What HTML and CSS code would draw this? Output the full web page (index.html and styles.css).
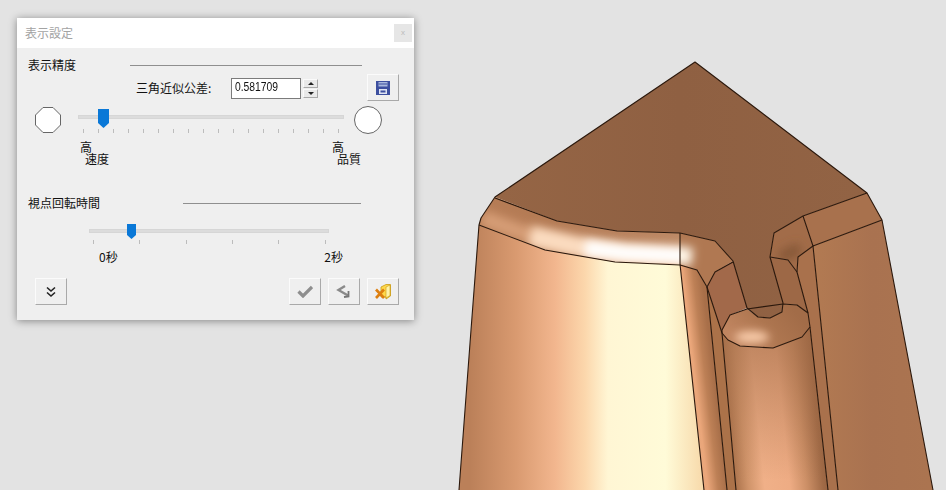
FILE: index.html
```html
<!DOCTYPE html>
<html lang="ja">
<head>
<meta charset="utf-8">
<title>表示設定</title>
<link rel="stylesheet" href="styles.css">
</head>
<body>
<svg class="model" width="946" height="490" viewBox="0 0 946 490" aria-hidden="true">
  <defs>
    <linearGradient id="gTop" gradientUnits="userSpaceOnUse" x1="500" y1="200" x2="860" y2="200">
      <stop offset="0" stop-color="#956545"/><stop offset=".5" stop-color="#8f6042"/><stop offset="1" stop-color="#926344"/>
    </linearGradient>
    <linearGradient id="gLeft" gradientUnits="userSpaceOnUse" x1="470" y1="400" x2="700" y2="400">
      <stop offset="0" stop-color="#bb8059"/><stop offset=".2" stop-color="#d99a70"/><stop offset=".37" stop-color="#f2b68e"/>
      <stop offset=".5" stop-color="#fcd7ac"/><stop offset=".6" stop-color="#fff6d4"/><stop offset=".85" stop-color="#fffbd8"/><stop offset="1" stop-color="#f8dcae"/>
    </linearGradient>
    <linearGradient id="gFillet" gradientUnits="userSpaceOnUse" x1="480" y1="210" x2="680" y2="210">
      <stop offset="0" stop-color="#b67c55"/><stop offset=".35" stop-color="#b47b55"/><stop offset="1" stop-color="#bd8a66"/>
    </linearGradient>
    <linearGradient id="gStrip" gradientUnits="userSpaceOnUse" x1="682" y1="400" x2="716" y2="396">
      <stop offset="0" stop-color="#e8ad82"/><stop offset=".45" stop-color="#eaa67a"/><stop offset=".75" stop-color="#bd8056"/><stop offset="1" stop-color="#a86f49"/>
    </linearGradient>
    <linearGradient id="gCyl" gradientUnits="userSpaceOnUse" x1="726" y1="404" x2="826" y2="394">
      <stop offset="0" stop-color="#a87049"/><stop offset=".14" stop-color="#d0946a"/><stop offset=".3" stop-color="#f0b088"/><stop offset=".55" stop-color="#eeac84"/>
      <stop offset=".72" stop-color="#cc8f66"/><stop offset=".88" stop-color="#a06a46"/><stop offset="1" stop-color="#8d5c3c"/>
    </linearGradient>
    <linearGradient id="gCylShade" gradientUnits="userSpaceOnUse" x1="770" y1="340" x2="770" y2="480">
      <stop offset="0" stop-color="#a06a46" stop-opacity=".6"/><stop offset="1" stop-color="#a06a46" stop-opacity="0"/>
    </linearGradient>
    <linearGradient id="gRight" gradientUnits="userSpaceOnUse" x1="815" y1="380" x2="930" y2="380">
      <stop offset="0" stop-color="#b27a52"/><stop offset=".5" stop-color="#a97250"/><stop offset="1" stop-color="#ab7450"/>
    </linearGradient>
    <linearGradient id="gOval" gradientUnits="userSpaceOnUse" x1="740" y1="345" x2="790" y2="305">
      <stop offset="0" stop-color="#c08560"/><stop offset=".5" stop-color="#ae7650"/><stop offset="1" stop-color="#a26c48"/>
    </linearGradient>
    <filter id="blur6" filterUnits="userSpaceOnUse" x="440" y="170" width="320" height="130"><feGaussianBlur stdDeviation="6"/></filter>
    <filter id="blur5" filterUnits="userSpaceOnUse" x="440" y="170" width="400" height="130"><feGaussianBlur stdDeviation="5"/></filter>
    <filter id="blur4" filterUnits="userSpaceOnUse" x="700" y="300" width="100" height="80"><feGaussianBlur stdDeviation="4"/></filter>
    <clipPath id="cFillet"><polygon points="495,197 481,218 479,225 545,250 615,262 680,264 680,233 617,231 557,221"/></clipPath>
    <clipPath id="cFillet2"><polygon points="680,233 715,241 733,261 715,272 707,287 697,270 680,265"/></clipPath>
    <clipPath id="cOval"><polygon points="783,304 797,305 808,313 810,327 802,337 773,348 740,346 728,340 722,333 722,330 730,315 747,309 758,317 770,318 782,312"/></clipPath>
    <clipPath id="cInner"><polygon points="770,257 774,233 803,216 813,246 798,257 797,272 788,260"/></clipPath>
  </defs>

  <polygon fill="url(#gTop)" points="695,62 495,197 557,221 617,231 680,233 715,241 733,261 747,308 758,317 770,318 782,312 783,303 770,257 774,233 803,216 867,193"/>
  <polygon fill="url(#gLeft)" points="479,225 545,250 615,262 680,264 704,490 459,490"/>
  <polygon fill="url(#gFillet)" points="495,197 481,218 479,225 545,250 615,262 680,264 680,233 617,231 557,221"/>
  <g clip-path="url(#cFillet)">
    <polyline points="482,218 520,232 565,246 625,258 690,264" fill="none" stroke="#d69d76" stroke-width="16" filter="url(#blur5)"/>
    <polyline points="530,236 575,246 625,254 690,258" fill="none" stroke="#fbdcc0" stroke-width="20" filter="url(#blur5)"/>
    <polyline points="585,248 625,253 690,256" fill="none" stroke="#ffffff" stroke-width="15" filter="url(#blur5)"/>
  </g>
  <polygon fill="#b07852" points="680,233 715,241 733,261 715,272 707,287 697,270 680,265"/>
  <g clip-path="url(#cFillet2)">
    <polyline points="668,254 692,257" fill="none" stroke="#fff6e8" stroke-width="18" filter="url(#blur5)"/>
  </g>
  <polygon fill="url(#gStrip)" points="680,264 697,270 707,287 727,490 704,490"/>
  <polygon fill="#a2694a" points="707,287 715,272 733,261 747,308 730,315 722,333"/>
  <polygon fill="#ab7249" points="707,287 722,333 736,490 727,490"/>
  <polygon fill="url(#gCyl)" points="722,333 740,346 773,348 802,337 810,327 828,490 736,490"/>
  <polygon fill="url(#gCylShade)" points="722,333 740,346 773,348 802,337 810,327 828,490 736,490"/>
  <polygon fill="#9d6846" points="770,257 788,260 797,272 808,313 797,305 783,304"/>
  <polygon fill="#a8714d" points="803,216 867,193 882,220 813,246"/>
  <polygon fill="#a26c49" points="770,257 774,233 803,216 813,246 798,257 797,272 788,260"/>
  <g clip-path="url(#cInner)">
    <polyline points="780,258 800,248" fill="none" stroke="#865839" stroke-width="12" filter="url(#blur5)"/>
  </g>
  <polygon fill="url(#gRight)" points="813,246 882,220 933,490 838,490"/>
  <polygon fill="#a9714c" points="813,246 798,257 797,272 808,313 810,327 828,490 838,490"/>
  <polygon fill="url(#gOval)" points="783,304 797,305 808,313 810,327 802,337 773,348 740,346 728,340 722,333 722,330 730,315 747,309 758,317 770,318 782,312"/>
  <g clip-path="url(#cOval)">
    <ellipse cx="752" cy="337" rx="17" ry="6" fill="#f9ccaa" filter="url(#blur4)"/>
  </g>

  <g fill="none" stroke="#2b180c" stroke-width="1.1" stroke-linejoin="round">
    <polyline points="459,490 471,330 479,225 481,218 495,197 695,62 867,193 882,220 933,490"/>
    <polyline points="495,198 557,221 617,231 680,233 715,241 733,261 747,308 758,317 770,318 782,312 783,303 770,257 774,233 803,216 867,193"/>
    <polyline points="479,225 545,250 615,262 680,265 697,270 707,287 715,272 733,262"/>
    <polyline points="680,233 680,264 704,490"/>
    <polyline points="707,287 727,490"/>
    <polyline points="707,287 722,333 736,490"/>
    <polyline points="803,216 813,246 882,220"/>
    <polyline points="813,246 838,490"/>
    <polyline points="813,246 798,257 797,272 808,313"/>
    <polyline points="770,257 788,260 797,272"/>
    <polyline points="810,327 828,490"/>
    <polygon points="783,304 797,305 808,313 810,327 802,337 773,348 740,346 728,340 722,333 722,330 730,315 747,309"/>
  </g>
</svg>

<section class="panel">
  <header class="titlebar">
    <span class="title">表示設定</span>
    <button class="close" type="button">x</button>
  </header>
  <div class="body">
    <div class="head head-1"><span>表示精度</span><i class="rule"></i></div>

    <div class="tolerance">
      <label class="tol-label">三角近似公差:</label>
      <div class="field"><span class="field-text">0.581709</span></div>
      <div class="spin">
        <span class="spin-btn"><i class="arrow-up"></i></span>
        <span class="spin-btn"><i class="arrow-down"></i></span>
      </div>
      <button class="btn btn-save" type="button">
        <svg width="14" height="14" viewBox="0 0 14 14">
          <rect width="14" height="14" fill="#3d4f9f"/>
          <rect x="2.5" y="1" width="9" height="4.5" fill="#a9b8dd"/>
          <rect x="2.5" y="2.5" width="9" height="1" fill="#3d4f9f"/>
          <rect x="3" y="8" width="8" height="5" fill="#dfe4f2"/>
          <rect x="4.5" y="9.5" width="5" height="2" fill="#3d4f9f"/>
        </svg>
      </button>
    </div>

    <div class="quality">
      <svg class="shape" width="28" height="28" viewBox="0 0 28 28">
        <polygon points="9,1.5 19,1.5 26.5,9 26.5,19 19,26.5 9,26.5 1.5,19 1.5,9" fill="#fff" stroke="#666" stroke-width="1"/>
      </svg>
      <div class="slider slider-q">
        <div class="track"></div>
        <svg class="thumb thumb-q" width="11" height="19" viewBox="0 0 11 19"><polygon points="0,0 11,0 11,14 5.5,19 0,14" fill="#0a78d7"/></svg>
        <div class="ticks">
          <i></i><i></i><i></i><i></i><i></i><i></i><i></i><i></i><i></i>
          <i></i><i></i><i></i><i></i><i></i><i></i><i></i><i></i><i></i>
        </div>
      </div>
      <svg class="shape" width="28" height="28" viewBox="0 0 28 28">
        <circle cx="14" cy="14" r="13.5" fill="#fff" stroke="#666" stroke-width="1"/>
      </svg>
    </div>

    <div class="ends ends-q">
      <div class="end"><span>高</span><span class="sub">速度</span></div>
      <div class="end"><span>高</span><span class="sub">品質</span></div>
    </div>

    <div class="head head-2"><span>視点回転時間</span><i class="rule"></i></div>

    <div class="slider slider-t">
      <div class="track"></div>
      <svg class="thumb thumb-t" width="9" height="15" viewBox="0 0 9 15"><polygon points="0,0 9,0 9,11 4.5,15 0,11" fill="#0a78d7"/></svg>
      <div class="ticks ticks-t"><i></i><i></i><i></i><i></i><i></i><i></i></div>
    </div>
    <div class="ends ends-t"><span>0秒</span><span>2秒</span></div>

    <div class="actions">
      <button class="btn" type="button">
        <svg width="12" height="12" viewBox="0 0 12 12"><path d="M2 1.5 L6 5 L10 1.5 M2 6.5 L6 10 L10 6.5" fill="none" stroke="#222" stroke-width="1.6"/></svg>
      </button>
      <div class="actions-right">
        <button class="btn" type="button">
          <svg width="16" height="13" viewBox="0 0 16 13"><path d="M1.5 6.5 L6 11 L15 2" fill="none" stroke="#8e8e8e" stroke-width="3.2"/></svg>
        </button>
        <button class="btn" type="button">
          <svg width="16" height="13" viewBox="0 0 16 13"><path d="M9 1 L2.5 5 L12 10.5" fill="none" stroke="#8a8a8a" stroke-width="2.4"/><path d="M12.5 6 L12.5 11.5 L8 12" fill="none" stroke="#777" stroke-width="1.8"/></svg>
        </button>
        <button class="btn" type="button">
          <svg width="16" height="16" viewBox="0 0 16 16">
            <polygon points="6,3 11,0.5 15.5,0.5 15.5,12 11,15 11,13 6,13" fill="#ffd84a" stroke="#c99a12" stroke-width=".8"/>
            <polygon points="11,3 15,1 15,11.5 11,14" fill="#fff3a8" stroke="#c99a12" stroke-width=".6"/>
            <path d="M1 5.5 L9 14 M9 5.5 L1 14" stroke="#dd7f10" stroke-width="2.6" fill="none"/>
          </svg>
        </button>
      </div>
    </div>
  </div>
</section>
</body>
</html>
```

FILE: styles.css
```css
* { box-sizing: border-box; }

html, body { height: 100%; }

body {
  margin: 0;
  background: #e3e3e3;
  overflow: hidden;
  font-family: "Noto Sans CJK JP", "Liberation Sans", sans-serif;
  font-size: 12px;
  color: #111;
}

.model {
  position: absolute;
  left: 0;
  top: 0;
  display: block;
}

.panel {
  position: absolute;
  left: 17px;
  top: 18px;
  width: 397px;
  height: 302px;
  background: #efefef;
  box-shadow: 0 1px 8px rgba(0, 0, 0, .42);
}

.titlebar {
  height: 30px;
  background: #fff;
  display: flex;
  align-items: center;
  justify-content: space-between;
  padding: 0 2px 0 8px;
}

.title { color: #a3a3a3; line-height: 14px; }

.close {
  width: 18px;
  height: 18px;
  border: 0;
  padding: 0;
  background: #e6e6e6;
  color: #bbb;
  font: 8px/18px "Liberation Sans", sans-serif;
}

.body { padding: 10px 15px 0 11px; }

.head {
  display: flex;
  align-items: center;
  height: 14px;
  line-height: 14px;
}

.rule {
  display: block;
  height: 1px;
  background: #8f8f8f;
}

.head-1 .rule { margin-left: 54px; width: 232px; }
.head-2 .rule { margin-left: 83px; width: 178px; }

.tolerance {
  display: flex;
  align-items: flex-start;
  height: 27px;
  margin-top: 2px;
  padding-left: 108px;
}

.tol-label {
  width: 95px;
  padding-top: 6px;
  line-height: 16px;
}

.field {
  width: 70px;
  height: 21px;
  margin-top: 4px;
  padding-left: 3px;
  background: #fff;
  border: 1px solid #7b7b7b;
  font: 12px/17px "Liberation Sans", sans-serif;
  color: #111;
}

.field-text {
  display: inline-block;
  transform: scaleX(.86);
  transform-origin: left center;
}

.spin {
  display: flex;
  flex-direction: column;
  gap: 1px;
  margin: 5px 0 0 2px;
}

.spin-btn {
  display: flex;
  align-items: center;
  justify-content: center;
  width: 15px;
  height: 9px;
  background: #e9e9e9;
  border: 1px solid;
  border-color: #fafafa #a8a8a8 #a8a8a8 #fafafa;
}

.arrow-up, .arrow-down {
  display: block;
  border-left: 3px solid transparent;
  border-right: 3px solid transparent;
}
.arrow-up { border-bottom: 3px solid #222; }
.arrow-down { border-top: 3px solid #222; }

.btn {
  display: flex;
  align-items: center;
  justify-content: center;
  width: 32px;
  height: 27px;
  padding: 0;
  background: #efefef;
  border: 1px solid;
  border-color: #fbfbfb #a9a9a9 #a9a9a9 #fbfbfb;
}

.btn-save { margin-left: 49px; }

.quality {
  display: flex;
  align-items: flex-start;
  height: 28px;
  margin-top: 5px;
  padding-left: 6px;
}

.shape { display: block; flex: none; }

.slider { position: relative; }

.slider-q {
  width: 266px;
  margin: 0 10px 0 16px;
  padding-top: 9px;
}

.track {
  height: 4px;
  background: #dcdcdc;
  border: 1px solid #d6d6d6;
}

.thumb {
  position: absolute;
  display: block;
}
.thumb-q { left: 20px; top: 3px; }
.thumb-t { left: 38px; top: 0; }

.ticks {
  display: flex;
  justify-content: space-between;
  margin-top: 10px;
  padding: 0 5px;
}
.ticks i {
  display: block;
  width: 1px;
  height: 4px;
  background: #bcbcbc;
}

.slider-t {
  width: 240px;
  height: 23px;
  margin: 14px 0 0 61px;
  padding-top: 5px;
}

.ticks-t {
  justify-content: flex-start;
  gap: 46px;
  margin-top: 7px;
  padding: 0 4px;
}
.ticks-t i:last-child { margin-left: auto; }

.ends { display: flex; justify-content: space-between; }

.ends-q {
  height: 24px;
  margin-top: 7px;
  padding: 0 38px 0 52px;
}

.end {
  display: flex;
  flex-direction: column;
  line-height: 12px;
}
.sub { padding-left: 5px; }

.head-2 { margin-top: 31px; }

.ends-t {
  height: 14px;
  line-height: 14px;
  margin-top: 3px;
  padding: 0 56px 0 71px;
}

.actions {
  display: flex;
  justify-content: space-between;
  margin-top: 14px;
  padding: 0 0 0 7px;
}

.actions-right {
  display: flex;
  gap: 7px;
}
```
